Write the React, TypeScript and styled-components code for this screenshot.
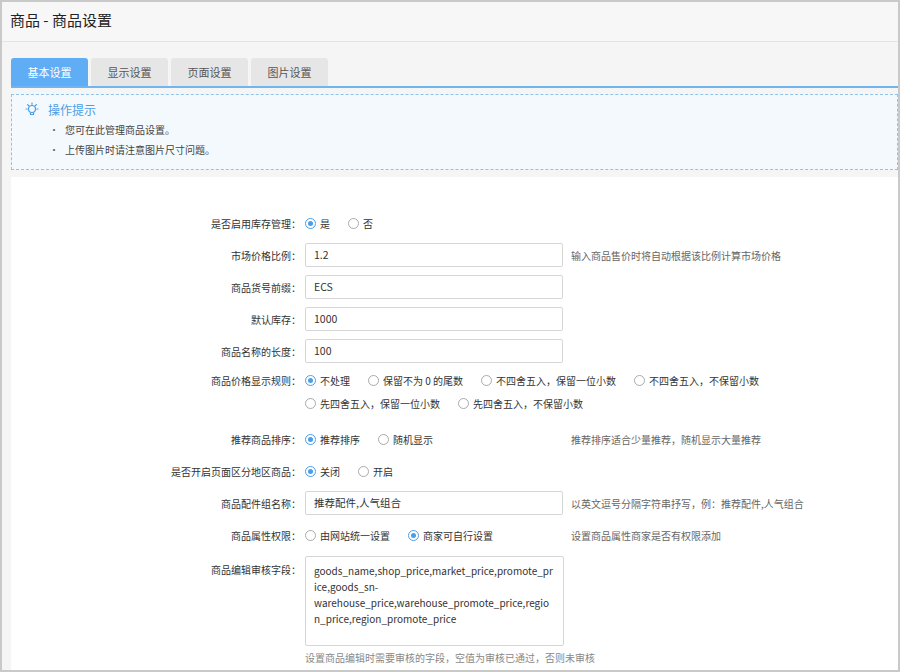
import React from 'react';
import styled, { createGlobalStyle } from 'styled-components';

const Global = createGlobalStyle`
  html, body { margin: 0; padding: 0; background: #fff; }
  body { font-family: "Noto Sans CJK SC", "Liberation Sans", sans-serif; font-size: 11px; color: #333; }
`;

const Frame = styled.div`
  box-sizing: border-box;
  width: 900px;
  height: 672px;
  border: 2px solid #c9c9c9;
  overflow: hidden;
  background: #f5f5f5;
  display: flex;
  flex-direction: column;
`;

const TitleBar = styled.div`
  height: 39px;
  flex-shrink: 0;
  background: #f7f7f7;
  border-bottom: 1px solid #e4e4e4;
  padding-left: 8px;
  font-size: 15px;
  line-height: 36px;
  color: #222;
`;

const Main = styled.div`
  padding: 16px 0 0 9px;
  flex: 1;
  display: flex;
  flex-direction: column;
`;

const Tabs = styled.div`
  display: flex;
  gap: 3px;
  border-bottom: 2px solid #6fb5ef;
`;

const Tab = styled.div<{ $active?: boolean }>`
  width: 77px;
  height: 28px;
  line-height: 28px;
  text-align: center;
  font-size: 11px;
  border-radius: 3px 3px 0 0;
  background: ${(p) => (p.$active ? '#5fadf4' : '#e6e6e6')};
  color: ${(p) => (p.$active ? '#fff' : '#555')};
`;

const Tips = styled.div`
  margin-top: 6px;
  border: 1px dashed #8ec3ee;
  background: #f4f9fd;
  padding: 6px 10px 0 12px;
  height: 76px;
  box-sizing: border-box;
`;

const TipsTitle = styled.div`
  display: flex;
  align-items: center;
  gap: 8px;
  color: #4a9fe8;
  font-size: 12px;
  margin-bottom: 2px;
`;

const TipLine = styled.div`
  padding-left: 25px;
  font-size: 10px;
  color: #444;
  line-height: 20px;
  &::before { content: '·'; margin-right: 6px; color: #666; }
`;

const Panel = styled.div`
  margin-top: 7px;
  background: #fff;
  flex: 1;
  padding-top: 30px;
`;

const Row = styled.div<{ $h?: number; $top?: boolean }>`
  display: flex;
  align-items: ${(p) => (p.$top ? 'flex-start' : 'center')};
  min-height: ${(p) => p.$h ?? 32}px;
`;

const Label = styled.div<{ $top?: boolean }>`
  width: 294px;
  flex-shrink: 0;
  text-align: right;
  padding-right: 4px;
  box-sizing: border-box;
  font-size: 10px;
  color: #333;
  padding-top: ${(p) => (p.$top ? '6px' : '0')};
`;

const Input = styled.div`
  box-sizing: border-box;
  width: 258px;
  height: 24px;
  border: 1px solid #d6d6d6;
  border-radius: 2px;
  padding-left: 8px;
  line-height: 22px;
  font-size: 10.5px;
  color: #333;
  flex-shrink: 0;
`;

const TextArea = styled.div`
  box-sizing: border-box;
  width: 259px;
  height: 90px;
  border: 1px solid #d6d6d6;
  border-radius: 2px;
  padding: 6px 8px;
  font-size: 10px;
  line-height: 16px;
  color: #333;
  word-break: break-all;
`;

const Hint = styled.div<{ $left?: number }>`
  margin-left: ${(p) => p.$left ?? 8}px;
  font-size: 10px;
  color: #666;
  white-space: nowrap;
`;

const Radios = styled.div<{ $w?: number }>`
  display: flex;
  flex-wrap: wrap;
  row-gap: 8px;
  width: ${(p) => (p.$w ? p.$w + 'px' : 'auto')};
  flex-shrink: 0;
`;

const RadioItem = styled.span`
  display: inline-flex;
  align-items: center;
  gap: 4px;
  margin-right: 18px;
  font-size: 10px;
  color: #333;
  white-space: nowrap;
`;

const Dot = styled.span<{ $on?: boolean }>`
  width: 9px;
  height: 9px;
  border-radius: 50%;
  border: 1px solid ${(p) => (p.$on ? '#4a9fe8' : '#aaa')};
  display: inline-flex;
  align-items: center;
  justify-content: center;
  &::after {
    content: '';
    width: 5px;
    height: 5px;
    border-radius: 50%;
    background: ${(p) => (p.$on ? '#4a9fe8' : 'transparent')};
  }
`;

const Radio = ({ on, children }: { on?: boolean; children: React.ReactNode }) => (
  <RadioItem>
    <Dot $on={on} />
    {children}
  </RadioItem>
);

const Bulb = () => (
  <svg width="16" height="16" viewBox="0 0 16 16" fill="none" stroke="#4a9fe8" strokeWidth="1.2">
    <circle cx="8" cy="7" r="3.5" />
    <path d="M6.5 10.5v2h3v-2" />
    <path d="M8 1v1.2M2 7h1.2M12.8 7H14M3.6 2.6l.9.9M12.4 2.6l-.9.9" strokeLinecap="round" />
  </svg>
);

export default function App() {
  return (
    <>
      <Global />
      <Frame>
        <TitleBar>商品 - 商品设置</TitleBar>
        <Main>
          <Tabs>
            <Tab $active>基本设置</Tab>
            <Tab>显示设置</Tab>
            <Tab>页面设置</Tab>
            <Tab>图片设置</Tab>
          </Tabs>
          <Tips>
            <TipsTitle><Bulb />操作提示</TipsTitle>
            <TipLine>您可在此管理商品设置。</TipLine>
            <TipLine>上传图片时请注意图片尺寸问题。</TipLine>
          </Tips>
          <Panel>
            <Row>
              <Label>是否启用库存管理：</Label>
              <Radios><Radio on>是</Radio><Radio>否</Radio></Radios>
            </Row>
            <Row>
              <Label>市场价格比例：</Label>
              <Input>1.2</Input>
              <Hint>输入商品售价时将自动根据该比例计算市场价格</Hint>
            </Row>
            <Row>
              <Label>商品货号前缀：</Label>
              <Input>ECS</Input>
            </Row>
            <Row>
              <Label>默认库存：</Label>
              <Input>1000</Input>
            </Row>
            <Row>
              <Label>商品名称的长度：</Label>
              <Input>100</Input>
            </Row>
            <Row $h={56} $top>
              <Label $top>商品价格显示规则：</Label>
              <Radios $w={596} style={{ paddingTop: 6 }}>
                <Radio on>不处理</Radio>
                <Radio>保留不为 0 的尾数</Radio>
                <Radio>不四舍五入，保留一位小数</Radio>
                <Radio>不四舍五入，不保留小数</Radio>
                <Radio>先四舍五入，保留一位小数</Radio>
                <Radio>先四舍五入，不保留小数</Radio>
              </Radios>
            </Row>
            <Row>
              <Label>推荐商品排序：</Label>
              <Radios $w={258}><Radio on>推荐排序</Radio><Radio>随机显示</Radio></Radios>
              <Hint>推荐排序适合少量推荐，随机显示大量推荐</Hint>
            </Row>
            <Row>
              <Label>是否开启页面区分地区商品：</Label>
              <Radios><Radio on>关闭</Radio><Radio>开启</Radio></Radios>
            </Row>
            <Row>
              <Label>商品配件组名称：</Label>
              <Input>推荐配件,人气组合</Input>
              <Hint>以英文逗号分隔字符串抒写，例：推荐配件,人气组合</Hint>
            </Row>
            <Row>
              <Label>商品属性权限：</Label>
              <Radios $w={258}><Radio>由网站统一设置</Radio><Radio on>商家可自行设置</Radio></Radios>
              <Hint>设置商品属性商家是否有权限添加</Hint>
            </Row>
            <Row $top style={{ marginTop: 5 }}>
              <Label $top>商品编辑审核字段：</Label>
              <TextArea>goods_name,shop_price,market_price,promote_price,goods_sn-<br />warehouse_price,warehouse_promote_price,region_price,region_promote_price</TextArea>
            </Row>
            <Row $h={22}>
              <Label />
              <Hint $left={0} style={{ color: '#888' }}>设置商品编辑时需要审核的字段，空值为审核已通过，否则未审核</Hint>
            </Row>
          </Panel>
        </Main>
      </Frame>
    </>
  );
}
